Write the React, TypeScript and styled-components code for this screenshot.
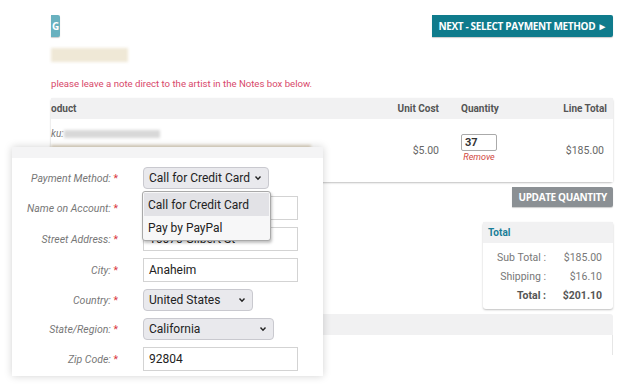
import styled, { createGlobalStyle } from 'styled-components'

const GlobalStyle = createGlobalStyle`
  html, body {
    margin: 0;
    background: #fff;
    font-family: Roboto, "Liberation Sans", sans-serif;
    color: #555;
  }
  #root {
    width: 629px;
    height: 388px;
    overflow: hidden;
    position: relative;
  }
`

const Page = styled.div`
  padding: 15px 16px 0 51px;
  display: flex;
  flex-direction: column;
`

const TopBar = styled.div`
  display: flex;
  justify-content: space-between;
  align-items: flex-start;
  height: 22px;
`

const Button = styled.div<{ $tone: 'teal' | 'pale' | 'gray' }>`
  display: flex;
  align-items: center;
  justify-content: ${({ $tone }) => ($tone === 'pale' ? 'flex-end' : 'center')};
  height: ${({ $tone }) => ($tone === 'gray' ? '20px' : '22px')};
  padding: ${({ $tone }) => ($tone === 'pale' ? '0 1px 0 0' : '0 6px')};
  width: ${({ $tone }) => ($tone === 'pale' ? '9px' : 'auto')};
  box-sizing: border-box;
  overflow: hidden;
  border-radius: 0 2px 2px 0;
  background: ${({ $tone }) =>
    $tone === 'teal' ? '#0f7b8c' : $tone === 'pale' ? '#69b1bf' : '#8b9094'};
  color: #fff;
  font-family: "Open Sans", sans-serif;
  font-weight: 700;
  font-size: 10px;
  letter-spacing: -0.35px;
  white-space: nowrap;
  box-shadow: 0 1px 1px rgba(0, 0, 0, 0.2);
`

const Blur = styled.div<{ $w: number; $h: number; $color: string }>`
  width: ${({ $w }) => $w}px;
  height: ${({ $h }) => $h}px;
  background: ${({ $color }) => $color};
  filter: blur(1.5px);
`

const BlurSlot = styled.div`
  margin-top: 11px;
`

const Note = styled.p`
  margin: 16px 0 0;
  font-size: 9.6px;
  color: #d8486a;
`

const Table = styled.div`
  margin-top: 9px;
  display: flex;
  flex-direction: column;
  border-radius: 3px;
  box-shadow: 0 1px 2px rgba(0, 0, 0, 0.25);
`

const Row = styled.div<{ $head?: boolean }>`
  display: grid;
  grid-template-columns: 1fr 90px 68px 106px;
  align-items: center;
  height: ${({ $head }) => ($head ? '21px' : '63px')};
  background: ${({ $head }) => ($head ? '#f1f1f2' : '#fff')};
  font-size: ${({ $head }) => ($head ? '10px' : '10.5px')};
  font-weight: ${({ $head }) => ($head ? 700 : 400)};
  color: ${({ $head }) => ($head ? '#555' : '#666')};
`

const Cell = styled.div<{ $align?: 'left' | 'right'; $pr?: number; $pl?: number }>`
  text-align: ${({ $align }) => $align ?? 'left'};
  padding-right: ${({ $pr }) => $pr ?? 0}px;
  padding-left: ${({ $pl }) => $pl ?? 0}px;
`

const ProductCell = styled.div`
  display: flex;
  flex-direction: column;
  gap: 6px;
  align-self: start;
  padding-top: 9px;
`

const Sku = styled.div`
  display: flex;
  align-items: center;
  font-style: italic;
  font-size: 10px;
  color: #777;
`

const QtyCell = styled.div`
  display: flex;
  flex-direction: column;
  align-items: flex-start;
  padding-left: 22px;
  gap: 1px;
  margin-top: -6px;
`

const QtyInput = styled.div`
  width: 36px;
  height: 17px;
  box-sizing: border-box;
  border: 1px solid #aaa;
  border-radius: 2px;
  padding: 1px 3px;
  font-size: 11px;
  font-weight: 700;
  color: #333;
`

const Remove = styled.div`
  width: 36px;
  text-align: center;
  font-style: italic;
  font-size: 9px;
  color: #d0463e;
`

const Actions = styled.div`
  display: flex;
  justify-content: flex-end;
  margin-top: 5px;
`

const TotalBox = styled.div`
  align-self: flex-end;
  margin-top: 15px;
  width: 130px;
  border-radius: 3px;
  box-shadow: 0 1px 2px rgba(0, 0, 0, 0.25);
  background: #fff;
`

const TotalHead = styled.div`
  height: 21px;
  display: flex;
  align-items: center;
  padding-left: 5px;
  background: #f1f1f2;
  color: #1a7e98;
  font-size: 10px;
  font-weight: 700;
`

const TotalRows = styled.div`
  display: grid;
  grid-template-columns: 63px 56px;
  row-gap: 7px;
  padding: 9px 0 7px;
  font-size: 10.5px;
  line-height: 12px;
`

const TotalLabel = styled.div<{ $bold?: boolean }>`
  text-align: right;
  font-weight: ${({ $bold }) => ($bold ? 700 : 400)};
  color: ${({ $bold }) => ($bold ? '#555' : '#777')};
`

const SectionBar = styled.div`
  margin-top: 5px;
  height: 21px;
  background: #f1f1f2;
  border-radius: 3px 3px 0 0;
`

const SectionBody = styled.div`
  height: 20px;
  border-right: 1px solid #e6e6e6;
`

const Overlay = styled.div`
  position: absolute;
  left: 12px;
  top: 147px;
  width: 311px;
  height: 229px;
  background: #fff;
  box-shadow: 0 0 8px rgba(0, 0, 0, 0.18);
  display: flex;
  flex-direction: column;
  overflow: hidden;
`

const OverlayHead = styled.div`
  height: 11px;
  background: #f4f4f5;
`

const Form = styled.div`
  display: grid;
  grid-template-columns: 106px 1fr;
  column-gap: 25px;
  row-gap: 7px;
  padding: 9px 24px 0 0;
  align-items: center;
  position: relative;
`

const Label = styled.div`
  text-align: right;
  font-style: italic;
  font-size: 10.5px;
  color: #777;
  white-space: nowrap;
  &::after {
    content: ' *';
    color: #d9363e;
    font-style: normal;
  }
`

const Field = styled.div<{ $w: number; $select?: boolean }>`
  width: ${({ $w }) => $w}px;
  height: ${({ $select }) => ($select ? '22px' : '24px')};
  box-sizing: border-box;
  display: flex;
  align-items: center;
  justify-content: space-between;
  padding: 0 6px 0 5px;
  font-size: 12px;
  color: #222;
  background: ${({ $select }) => ($select ? '#e9e9ed' : '#fff')};
  border: 1px solid ${({ $select }) => ($select ? '#c9c9cf' : '#d3d3d3')};
  border-radius: ${({ $select }) => ($select ? '4px' : '0')};
  white-space: nowrap;
  overflow: hidden;
`

const Chevron = () => (
  <svg width="8" height="6" viewBox="0 0 8 6">
    <path d="M1.5 1.5 L4 4.2 L6.5 1.5" fill="none" stroke="#222" strokeWidth="1.4" />
  </svg>
)

const Menu = styled.div`
  position: absolute;
  left: 130px;
  top: 33px;
  width: 129px;
  box-sizing: border-box;
  padding: 1px;
  background: #f7f7f8;
  border: 1px solid #a9a9a9;
  border-radius: 3px;
  box-shadow: 1px 2px 3px rgba(0, 0, 0, 0.25);
`

const MenuItem = styled.div<{ $active?: boolean }>`
  height: 23px;
  display: flex;
  align-items: center;
  padding-left: 4px;
  font-size: 12px;
  color: #222;
  background: ${({ $active }) => ($active ? '#e2e2e6' : 'transparent')};
`

const fields: { label: string; value: string; w: number; select?: boolean }[] = [
  { label: 'Payment Method:', value: 'Call for Credit Card', w: 126, select: true },
  { label: 'Name on Account:', value: '', w: 155 },
  { label: 'Street Address:', value: '16070 Gilbert St', w: 155 },
  { label: 'City:', value: 'Anaheim', w: 155 },
  { label: 'Country:', value: 'United States', w: 110, select: true },
  { label: 'State/Region:', value: 'California', w: 131, select: true },
  { label: 'Zip Code:', value: '92804', w: 155 },
]

export default function App() {
  return (
    <>
      <GlobalStyle />
      <Page>
        <TopBar>
          <Button $tone="pale">G</Button>
          <Button $tone="teal">NEXT - SELECT PAYMENT METHOD ►</Button>
        </TopBar>
        <BlurSlot>
          <Blur $w={77} $h={14} $color="#efe8d6" />
        </BlurSlot>
        <Note>please leave a note direct to the artist in the Notes box below.</Note>
        <Table>
          <Row $head>
            <Cell>oduct</Cell>
            <Cell $align="right">Unit Cost</Cell>
            <Cell $pl={22}>Quantity</Cell>
            <Cell $align="right" $pr={6}>Line Total</Cell>
          </Row>
          <Row>
            <ProductCell>
              <Sku>
                ku:
                <Blur $w={96} $h={8} $color="#d8d8d8" />
              </Sku>
              <Blur $w={260} $h={4} $color="#ddd3bf" />
            </ProductCell>
            <Cell $align="right">$5.00</Cell>
            <QtyCell>
              <QtyInput>37</QtyInput>
              <Remove>Remove</Remove>
            </QtyCell>
            <Cell $align="right" $pr={9}>$185.00</Cell>
          </Row>
        </Table>
        <Actions>
          <Button $tone="gray">UPDATE QUANTITY</Button>
        </Actions>
        <TotalBox>
          <TotalHead>Total</TotalHead>
          <TotalRows>
            <TotalLabel>Sub Total :</TotalLabel>
            <TotalLabel>$185.00</TotalLabel>
            <TotalLabel>Shipping :</TotalLabel>
            <TotalLabel>$16.10</TotalLabel>
            <TotalLabel $bold>Total :</TotalLabel>
            <TotalLabel $bold>$201.10</TotalLabel>
          </TotalRows>
        </TotalBox>
        <SectionBar />
        <SectionBody />
      </Page>
      <Overlay>
        <OverlayHead />
        <Form>
          {fields.map((f) => (
            <FieldRow key={f.label} {...f} />
          ))}
          <Menu>
            <MenuItem $active>Call for Credit Card</MenuItem>
            <MenuItem>Pay by PayPal</MenuItem>
          </Menu>
        </Form>
      </Overlay>
    </>
  )
}

function FieldRow({ label, value, w, select }: { label: string; value: string; w: number; select?: boolean }) {
  return (
    <>
      <Label>{label}</Label>
      <Field $w={w} $select={select}>
        <span>{value}</span>
        {select ? <Chevron /> : null}
      </Field>
    </>
  )
}
